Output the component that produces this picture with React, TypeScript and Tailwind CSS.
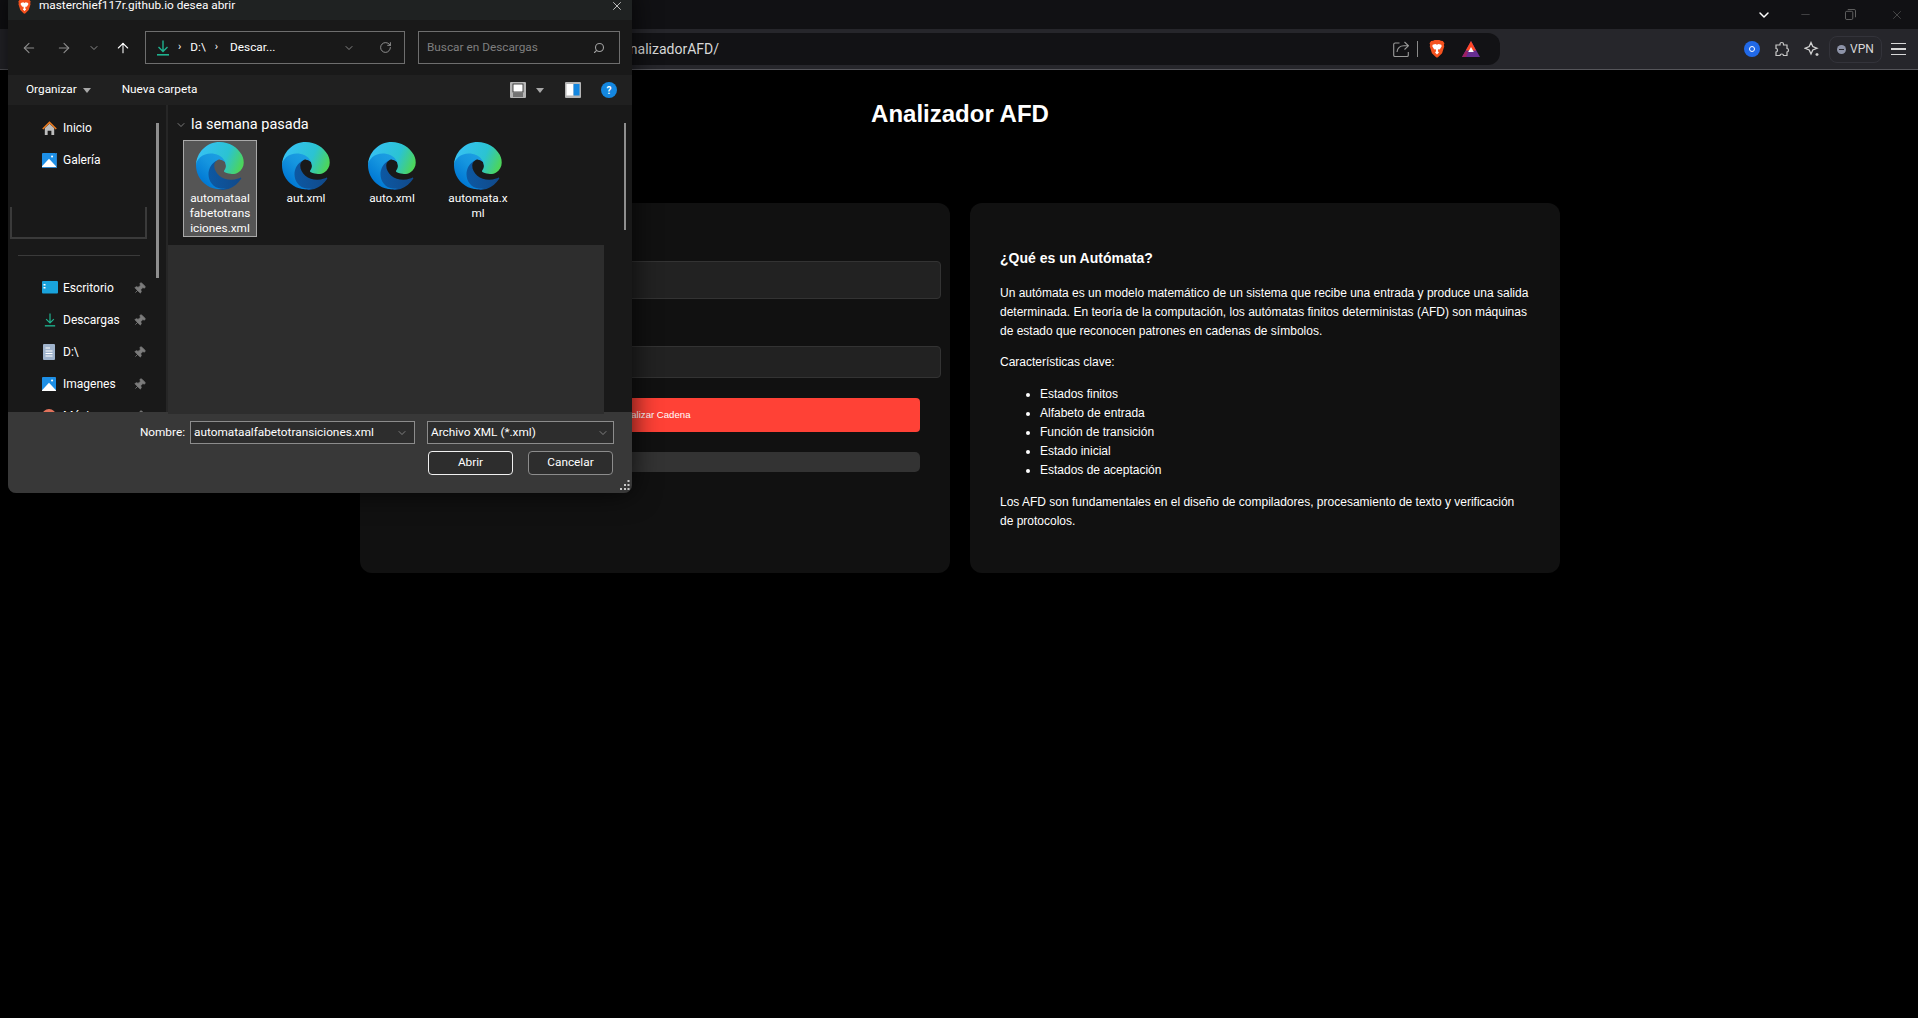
import { ArrowLeft, ArrowRight, ArrowUp, ChevronDown, Pin, RotateCw, Search, X, Minus } from "lucide-react";

const FILES = [
  { lines: ["automataal", "fabetotrans", "iciones.xml"], selected: true },
  { lines: ["aut.xml"] },
  { lines: ["auto.xml"] },
  { lines: ["automata.x", "ml"] },
];

function EdgeIcon() {
  return (
    <svg viewBox="0 0 256 256" className="h-12 w-12 shrink-0">
      <defs>
        <linearGradient id="edgeA" x1="60" y1="176" x2="235" y2="176" gradientUnits="userSpaceOnUse">
          <stop offset="0" stopColor="#0c59a4" />
          <stop offset="1" stopColor="#114a8b" />
        </linearGradient>
        <linearGradient id="edgeB" x1="150" y1="100" x2="40" y2="220" gradientUnits="userSpaceOnUse">
          <stop offset="0" stopColor="#1b9de2" />
          <stop offset="0.4" stopColor="#1595df" />
          <stop offset="1" stopColor="#0078d4" />
        </linearGradient>
        <linearGradient id="edgeC" x1="30" y1="40" x2="240" y2="130" gradientUnits="userSpaceOnUse">
          <stop offset="0" stopColor="#35c1f1" />
          <stop offset="0.6" stopColor="#2bc3d2" />
          <stop offset="1" stopColor="#4cd55c" />
        </linearGradient>
      </defs>
      <path fill="url(#edgeA)" d="M235.5 190.4c-3.5 1.8-7.1 3.4-10.8 4.8-11.8 4.4-24.2 6.6-36.8 6.6-48.5 0-90.7-33.4-90.7-76.2.1-11.7 6.6-22.5 16.9-28-43.9 1.8-55.1 47.6-55.1 74.4 0 75.8 69.9 83.5 84.9 83.5 8.1 0 20.3-2.4 27.7-4.7l1.3-.4c28.3-9.8 52.2-28.9 68.1-54.3 1.2-1.9.6-4.4-1.3-5.6-1.3-.7-2.9-.7-4.1.1z" />
      <path fill="url(#edgeB)" d="M105.7 241.4c-9.1-5.7-17-13.1-23.3-21.8-26.6-36.5-18.7-87.6 17.8-114.3 3.8-2.8 7.8-5.2 12-7.2 3.1-1.5 8.5-4.2 15.6-4.1 10.3.1 19.9 4.9 26 13.1 4.1 5.4 6.3 11.9 6.4 18.6 0-.2 24.6-79.9-80.4-79.9C36.1 46 0 86.1 0 122.4c-.2 19.2 3.9 38.2 12 55.6 27.4 58.4 94.1 87 155.2 66.6-20.9 6.6-43 3.6-61.5-3.2z" />
      <path fill="url(#edgeC)" d="M152.3 148.9c-.8 1.1-3.3 2.5-3.3 5.7 0 2.6 1.7 5.1 4.7 7.2 14.2 9.9 41 8.6 41.1 8.6 10.5 0 20.8-2.8 29.9-8.2 18.4-10.7 29.7-30.4 29.8-51.7.3-22.1-7.9-36.8-11.2-43.3C221.3 27.6 176.1 0 126.3 0 56.3 0 1 56.3 0 126.3c.5-36.2 36.5-65.5 79.3-65.5 3.5 0 23.4.3 41.9 10 16.3 8.6 24.8 18.9 30.8 29.2 6.2 10.7 7.3 24.3 7.3 29.7 0 5.4-2.7 13.4-7.1 19.2z" />
    </svg>
  );
}

function BraveIcon({ className }: { className: string }) {
  return (
    <svg viewBox="0 0 20 23" className={className}>
      <path fill="#f4511e" d="M5 1 L7 0 H13 L15 1 L17.5 1.2 L19.5 4 L18.8 6 L19.3 8 L16.5 17 L11.5 21.8 L10 22.6 L8.5 21.8 L3.5 17 L.7 8 L1.2 6 L.5 4 L2.5 1.2z" />
      <path fill="#fff" d="M4.5 6 L8 5 L10 6 L12 5 L15.5 6 L16 8 L13.5 12 L12 11.5 L11 14 L12.5 16 L10 18.5 L7.5 16 L9 14 L8 11.5 L6.5 12 L4 8z" />
    </svg>
  );
}

function DownloadIcon({ className }: { className: string }) {
  return (
    <svg viewBox="0 0 14 16" className={className} fill="none" stroke="#1fb28f" strokeWidth="1.4">
      <path d="M7 0.5V11M2.5 7L7 11.5L11.5 7" />
      <path d="M1 14.8H13" strokeWidth="1.6" />
    </svg>
  );
}

function PicIcon({ className }: { className: string }) {
  return (
    <svg viewBox="0 0 16 16" className={className}>
      <rect width="16" height="16" fill="#1d8fe6" rx="1" />
      <circle cx="11.5" cy="4" r="1.2" fill="#fff" />
      <path fill="#fff" d="M0 15 L8 6.5 L16 15 V16 H0z" />
    </svg>
  );
}

function SideItem({ icon, label, pinned }: { icon: React.ReactNode; label: string; pinned?: boolean }) {
  return (
    <div className="flex h-8 shrink-0 items-center pr-[20px] pl-[34px] text-[12px] text-white">
      <span className="flex w-[21px] shrink-0 items-center">{icon}</span>
      <span className="flex-1">{label}</span>
      {pinned && <Pin className="h-[13px] w-[13px] rotate-45 fill-[#7c7c7c] text-[#7c7c7c]" strokeWidth={1.5} />}
    </div>
  );
}

function FileDialog() {
  return (
    <div className="absolute top-[-10px] left-2 flex h-[503px] w-[624px] flex-col overflow-hidden rounded-lg bg-[#191919] font-['Roboto',sans-serif] text-[11.8px] shadow-[0_0_28px_rgba(0,0,0,0.75)]">
      <div className="flex h-[30px] shrink-0 items-center bg-[#1f2222] pt-[2px] pr-2 pl-[10px] text-white">
        <BraveIcon className="mr-2 h-[15px] w-[13px]" />
        <span className="flex-1">masterchief117r.github.io desea abrir</span>
        <X className="h-[14px] w-[14px]" strokeWidth={1.2} />
      </div>

      <div className="flex h-[55px] shrink-0 items-center bg-[#191919] pr-3">
        <ArrowLeft className="ml-[13px] h-4 w-4 text-[#8c8c8c]" strokeWidth={1.6} />
        <ArrowRight className="ml-[19px] h-4 w-4 text-[#8c8c8c]" strokeWidth={1.6} />
        <ChevronDown className="ml-[16px] h-3 w-3 text-[#8c8c8c]" strokeWidth={2} />
        <ArrowUp className="ml-[15px] h-4 w-4 text-white" strokeWidth={1.6} />
        <div className="ml-[14px] flex h-[33px] w-[260px] items-center border border-[#6e6e6e] pl-[10px] text-white">
          <DownloadIcon className="h-4 w-[14px]" />
          <span className="ml-[8px] text-[11px]">›</span>
          <span className="ml-[9px]">D:\</span>
          <span className="ml-[9px] text-[11px]">›</span>
          <span className="ml-[12px]">Descar...</span>
          <ChevronDown className="ml-[68px] h-3 w-3 text-[#a8a8a8]" strokeWidth={1.5} />
          <RotateCw className="ml-[24px] h-[13px] w-[13px] text-[#a8a8a8]" strokeWidth={1.5} />
        </div>
        <div className="ml-[13px] flex h-[33px] flex-1 items-center justify-between border border-[#6e6e6e] pr-[14px] pl-2 text-[#7f7f7f]">
          <span>Buscar en Descargas</span>
          <Search className="h-3 w-3 -scale-x-100 text-[#a0a0a0]" strokeWidth={2.2} />
        </div>
      </div>

      <div className="flex h-[30px] shrink-0 items-center bg-[#202020] text-white">
        <span className="ml-[18px]">Organizar</span>
        <span className="ml-[6px] h-0 w-0 border-x-[4px] border-t-[5px] border-x-transparent border-t-[#a8a8a8]" />
        <span className="ml-[31px] flex-1">Nueva carpeta</span>
        <svg viewBox="0 0 16 16" className="h-4 w-4">
          <rect width="16" height="16" rx="1" fill="#b5b5b5" />
          <rect x="3" y="2" width="10" height="8" fill="#fff" stroke="#222" strokeWidth="0.8" />
          <path d="M3 12H13M3 14H13" stroke="#333" />
        </svg>
        <span className="ml-[10px] h-0 w-0 border-x-[4.5px] border-t-[5px] border-x-transparent border-t-[#a8a8a8]" />
        <svg viewBox="0 0 16 16" className="ml-[21px] h-4 w-4">
          <rect width="16" height="16" rx="1" fill="#b5b5b5" />
          <rect x="1.5" y="2" width="7" height="11.5" fill="#fff" />
          <rect x="8.5" y="2" width="6" height="11.5" fill="#1487e0" />
        </svg>
        <span className="mr-[15px] ml-5 flex h-4 w-4 items-center justify-center rounded-full bg-[#1487e0] text-[10px] font-bold text-white">?</span>
      </div>

      <div className="relative flex min-h-0 flex-1">
        <div className="relative flex w-[158px] shrink-0 flex-col overflow-hidden bg-[#191919] pt-[7px]">
          <SideItem
            label="Inicio"
            icon={
              <svg viewBox="0 0 16 16" className="h-[15px] w-[15px]">
                <path fill="#bdbdbd" d="M3 7.5 L8 3 L13 7.5 V15 H10 V10.5 H6 V15 H3z" />
                <path fill="none" stroke="#e8791e" strokeWidth="1.7" d="M.8 8.5 L8 1.5 L15.2 8.5" />
              </svg>
            }
          />
          <SideItem
            label="Galería"
            icon={
              <span className="block h-[15px] w-[15px] border-r border-b border-[#2a7fc4]">
                <PicIcon className="h-[14px] w-[14px]" />
              </span>
            }
          />
          <div className="mt-[31px] ml-[2px] h-8 w-[137px] shrink-0 border-x-2 border-b-2 border-[#3a3a3a]" />
          <div className="mt-4 ml-[10px] h-px w-[122px] shrink-0 bg-[#3a3a3a]" />
          <div className="mt-4 flex flex-col">
            <SideItem
              label="Escritorio"
              pinned
              icon={
                <svg viewBox="0 0 16 14" className="h-[14px] w-4">
                  <rect width="16" height="12.5" rx="1" fill="#19a3dc" />
                  <rect x="1.5" y="3" width="2" height="1.5" fill="#fff" />
                  <rect x="1.5" y="6" width="2" height="1.5" fill="#fff" />
                </svg>
              }
            />
            <SideItem label="Descargas" pinned icon={<DownloadIcon className="ml-[2px] h-4 w-3" />} />
            <SideItem
              label="D:\"
              pinned
              icon={
                <svg viewBox="0 0 12 16" className="ml-[1px] h-4 w-3">
                  <rect width="12" height="16" rx="1" fill="#9fb3cc" />
                  <path d="M2.5 4H7M2.5 7H9.5M2.5 9.5H9.5M2.5 12H9.5" stroke="#fff" strokeWidth="1.2" />
                </svg>
              }
            />
            <SideItem label="Imagenes" pinned icon={<PicIcon className="h-[14px] w-[14px]" />} />
            <SideItem
              label="Música"
              pinned
              icon={<span className="block h-[14px] w-[14px] rounded-full bg-[#e2725b]" />}
            />
          </div>
          <div className="absolute top-[18px] left-[148px] h-[155px] w-[3px] bg-[#8e8e8e]" />
        </div>

        <div className="w-[2px] shrink-0 bg-[#262626]" />

        <div className="relative flex min-w-0 flex-1 flex-col">
          <div className="flex h-[30px] shrink-0 items-center pt-[10px] pl-[7px] text-[14.5px] text-white">
            <ChevronDown className="mr-[4px] h-[12px] w-[12px] text-[#9a9a9a]" strokeWidth={1.5} />
            <span>la semana pasada</span>
          </div>
          <div className="mt-[5px] flex h-[97px] shrink-0 gap-3 pl-[15px]">
            {FILES.map((f) => (
              <div
                key={f.lines[0]}
                className={`flex h-[97px] w-[74px] flex-col items-center border pt-[1px] leading-[15px] text-white ${
                  f.selected ? "border-[#a9a9a9] bg-[#555555]" : "border-transparent"
                }`}
              >
                <EdgeIcon />
                <span className="mt-px flex flex-col items-center">
                  {f.lines.map((line) => (
                    <span key={line}>{line}</span>
                  ))}
                </span>
              </div>
            ))}
          </div>
          <div className="relative z-10 mt-2 mr-[28px] -mb-[2px] flex-1 bg-[#2d2d2d]" />
          <div className="absolute top-[18px] right-[6px] h-[107px] w-[2px] bg-[#8e8e8e]" />
        </div>
      </div>

      <div className="relative flex h-[81px] shrink-0 flex-col bg-[#383838] pt-[9px] pr-[18px] text-white">
        <div className="flex h-[23px] items-center justify-end">
          <span className="mr-[5px]">Nombre:</span>
          <div className="flex h-[23px] w-[225px] items-center justify-between border border-[#8c8c8c] bg-[#2d2d2d] pt-px pr-[6px] pl-[3px]">
            <span>automataalfabetotransiciones.xml</span>
            <ChevronDown className="h-3 w-3 text-[#a8a8a8]" strokeWidth={1.3} />
          </div>
          <div className="ml-3 flex h-[23px] w-[187px] items-center justify-between border border-[#8c8c8c] bg-[#2d2d2d] pr-[4px] pl-[3px]">
            <span>Archivo XML (*.xml)</span>
            <ChevronDown className="h-3 w-3 text-[#a8a8a8]" strokeWidth={1.3} />
          </div>
        </div>
        <div className="mt-[7px] flex justify-end gap-[15px] pr-px">
          <div className="flex h-6 w-[85px] items-center justify-center rounded-[4px] border border-[#f0f0f0] bg-[#2d2d2d]">Abrir</div>
          <div className="flex h-6 w-[85px] items-center justify-center rounded-[4px] border border-[#8c8c8c] bg-[#2d2d2d]">Cancelar</div>
        </div>
        <svg viewBox="0 0 10 10" className="absolute right-[2px] bottom-[3px] h-[10px] w-[10px]" fill="#c8c8c8">
          <rect x="7.5" y="0" width="2" height="2" />
          <rect x="4" y="4" width="2" height="2" />
          <rect x="7.5" y="4" width="2" height="2" />
          <rect x="0" y="8" width="2" height="2" />
          <rect x="4" y="8" width="2" height="2" />
          <rect x="7.5" y="8" width="2" height="2" />
        </svg>
      </div>
    </div>
  );
}

function BrowserChrome() {
  return (
    <>
      <div className="flex h-[29px] shrink-0 items-center justify-end bg-[#111114] text-[#6a6a6a]">
        <ChevronDown className="mr-[27px] h-4 w-4 text-white" strokeWidth={2.2} />
        <Minus className="mr-[33px] h-[13px] w-[13px]" strokeWidth={1} />
        <svg viewBox="0 0 12 12" className="mr-[34px] h-[11px] w-[11px]" fill="none" stroke="currentColor">
          <rect x="0.5" y="2.5" width="8" height="9" rx="1.5" />
          <path d="M3 .5H10A1.5 1.5 0 0 1 11.5 2V9" />
        </svg>
        <X className="mr-[14px] h-[14px] w-[14px]" strokeWidth={1} />
      </div>
      <div className="flex h-[41px] shrink-0 items-center border-b border-[#55555a] bg-[#26262b] pl-[300px] font-['Roboto',sans-serif]">
        <div className="flex h-8 w-[1200px] items-center rounded-xl bg-[#121215] pr-[20px] pl-[155px]">
          <span className="flex-1 text-[14px] text-[#d8d8d8]">masterchief117r.github.io/AnalizadorAFD/</span>
          <svg viewBox="0 0 16 16" className="h-4 w-4" fill="none" stroke="#9a9a9a" strokeWidth="1.1">
            <path d="M6.5 2H2.2A1.5 1.5 0 0 0 .7 3.5V14.2A1.3 1.3 0 0 0 2 15.5H14A1.3 1.3 0 0 0 15.3 14.2V11" />
            <path d="M4 11C4.5 7 7.5 4.8 11 4.8H15M11.5 1L15.5 4.8L11.5 8.5" />
          </svg>
          <span className="mr-[11px] ml-2 h-4 w-px bg-[#8a8a8a]" />
          <BraveIcon className="h-[18px] w-4" />
          <svg viewBox="0 0 18 16" className="ml-[17px] h-4 w-[18px]">
            <path fill="#662d91" d="M9 0L18 16H0z" />
            <path fill="#ff4724" d="M9 0L14 9.5H3.8z" />
            <path fill="#fff" d="M9 6L11.8 11H6.2z" />
            <path fill="#9e1f63" d="M3.5 10L6 11L4 16H0z" />
          </svg>
        </div>
        <span className="ml-[244px] flex h-4 w-4 items-center justify-center rounded-full bg-[#2169e8]">
          <span className="h-[6px] w-[6px] rounded-sm border border-white" />
        </span>
        <svg viewBox="0 0 16 16" className="ml-[14px] h-4 w-4" fill="none" stroke="#c8c8c8" strokeWidth="1.2">
          <path d="M6 3C6 1 9.5 1 9.5 3V4H13V7.5C15 7.5 15 11 13 11V14.5H9.5C9.5 12.5 6 12.5 6 14.5H2V11C4 11 4 7.5 2 7.5V4H6z" />
        </svg>
        <svg viewBox="0 0 16 16" className="ml-[14px] h-4 w-4" fill="none" stroke="#d0d0d0" strokeWidth="1.3">
          <path d="M7 1.5L8.8 5.5L13 7.3L8.8 9L7 13L5.2 9L1 7.3L5.2 5.5z" />
          <path d="M13 12V15M11.5 13.5H14.5" />
        </svg>
        <div className="ml-[9px] flex h-[27px] w-[53px] items-center justify-center gap-1 rounded-lg border border-[#33333a] text-[12px] text-[#d8d8d8]">
          <span className="flex h-[9px] w-[9px] items-center justify-center rounded-full bg-[#8d93a8]">
            <span className="h-px w-[5px] bg-[#26262b]" />
          </span>
          VPN
        </div>
        <div className="ml-[9px] flex w-[15px] flex-col gap-1">
          <span className="h-[1.5px] bg-[#d8d8d8]" />
          <span className="h-[1.5px] bg-[#d8d8d8]" />
          <span className="h-[1.5px] bg-[#d8d8d8]" />
        </div>
      </div>
    </>
  );
}

export default function App() {
  return (
    <div className="relative flex h-[1018px] w-full flex-col overflow-hidden bg-black">
      <BrowserChrome />
      <main className="flex flex-col items-center pl-[2px] font-['Liberation_Sans',Arial,sans-serif] text-white">
        <h1 className="mt-[30px] text-[24px] leading-[28px] font-bold">Analizador AFD</h1>
        <div className="mt-[75px] flex w-[1200px] gap-5">
          <section className="h-[370px] w-[590px] shrink-0 rounded-xl bg-[#111111] px-[30px] pt-[58px]">
            <div className="h-[38px] w-[551px] rounded-[4px] border border-[#333333] bg-[#222222]" />
            <div className="mt-[47px] h-[32px] w-[551px] rounded-[4px] border border-[#333333] bg-[#222222]" />
            <button className="mt-5 flex h-[34px] w-full items-center justify-center rounded-[4px] bg-[#ff4136] text-[9.6px] font-medium text-white">
              Analizar Cadena
            </button>
            <div className="mt-5 h-5 w-full rounded-[5px] bg-[#333333]" />
          </section>
          <section className="h-[370px] w-[590px] shrink-0 rounded-xl bg-[#111111] px-[30px] pt-[47px] text-[12px] leading-[19px]">
            <h3 className="text-[14px] leading-4 font-bold">¿Qué es un Autómata?</h3>
            <p className="mt-[18px]">
              Un autómata es un modelo matemático de un sistema que recibe una entrada y produce una salida determinada. En teoría de la computación, los autómatas finitos deterministas (AFD) son máquinas de estado que reconocen patrones en cadenas de símbolos.
            </p>
            <p className="mt-3">Características clave:</p>
            <ul className="mt-[13px] list-disc pl-10">
              <li>Estados finitos</li>
              <li>Alfabeto de entrada</li>
              <li>Función de transición</li>
              <li>Estado inicial</li>
              <li>Estados de aceptación</li>
            </ul>
            <p className="mt-[13px]">
              Los AFD son fundamentales en el diseño de compiladores, procesamiento de texto y verificación de protocolos.
            </p>
          </section>
        </div>
      </main>
      <FileDialog />
    </div>
  );
}
